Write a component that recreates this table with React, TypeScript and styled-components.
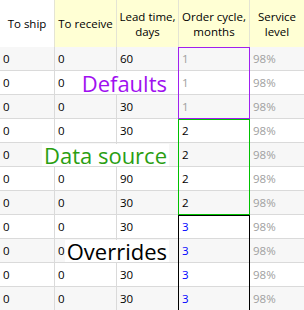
import styled, { createGlobalStyle } from "styled-components";

const GlobalStyle = createGlobalStyle`
  html, body {
    margin: 0;
    padding: 0;
    background: #ffffff;
  }
  body {
    font-family: "Open Sans", "Noto Sans", sans-serif;
  }
`

const grid = "#dadada";

const Table = styled.div`
  display: grid;
  grid-template-columns: 55px 62px 62px 71px 54px;
  grid-template-rows: 47px repeat(11, 24px);
  width: 304px;
  height: 310px;
  overflow: hidden;
  font-size: 11.5px;
  color: #000;
`

const HeadCell = styled.div<{ $plain?: boolean, $last?: boolean }>`
  grid-row: 1;
  box-sizing: border-box;
  display: flex;
  align-items: center;
  justify-content: center;
  text-align: center;
  line-height: 15px;
  padding: 0 2px;
  background: ${props => props.$plain ? "#ffffff" : "#ffffd4"};
  border-right: ${props => props.$last ? "none" : "1px solid #e4e4d4"};
`

const Cell = styled.div<{ $row: number, $col: number, $color?: string }>`
  grid-row: ${props => props.$row};
  grid-column: ${props => props.$col};
  box-sizing: border-box;
  display: flex;
  align-items: center;
  padding-left: 3px;
  background: ${props => props.$row % 2 === 0 ? "#f7f7f7" : "#ffffff"};
  color: ${props => props.$color || "#000"};
  border-bottom: 1px solid ${grid};
  border-right: ${props => props.$col === 5 ? "none" : `1px solid ${grid}`};
`

const Frame = styled.div<{ $color: string, $row: number, $span: number }>`
  grid-column: 4;
  grid-row: ${props => `${props.$row} / span ${props.$span}`};
  margin-left: -1px;
  border: 1px solid ${props => props.$color};
  pointer-events: none;
`

const Label = styled.div<{ $color: string, $row: number }>`
  grid-column: 1 / 4;
  grid-row: ${props => props.$row};
  justify-self: end;
  align-self: center;
  margin-right: 10px;
  padding: 0 2px;
  background: #ffffff;
  color: ${props => props.$color};
  font-size: 22px;
  line-height: 22px;
`

// a row: [to ship, to receive, lead time] — null where a label sits on top
type Row = [string, string | null, string | null]

type Group = {
  value: string
  color: string
  frame: string
  label: string
  labelColor: string
  rows: Row[]
}

const groups: Group[] = [
  {
    value: "1", color: "#a0a0a0", frame: "#a020f0", label: "Defaults", labelColor: "#a010f0",
    rows: [["0", "0", "60"], ["0", "0", null], ["0", "0", "30"]]
  },
  {
    value: "2", color: "#000000", frame: "#00c000", label: "Data source", labelColor: "#2a9e12",
    rows: [["0", "0", "30"], ["0", null, null], ["0", "0", "90"], ["0", "0", "30"]]
  },
  {
    value: "3", color: "#0000ff", frame: "#000000", label: "Overrides", labelColor: "#000000",
    rows: [["0", "0", "30"], ["0", "0", null], ["0", "0", "30"], ["0", "0", "30"]]
  },
]

const App = () => {
  let row = 2;
  const cells: JSX.Element[] = [];
  const overlays: JSX.Element[] = [];

  groups.forEach((g, gi) => {
    overlays.push(<Frame key={`f${gi}`} $color={g.frame} $row={row} $span={g.rows.length}/>);
    overlays.push(<Label key={`l${gi}`} $color={g.labelColor} $row={row + 1}>{g.label}</Label>);
    g.rows.forEach(([ship, receive, lead]) => {
      cells.push(
        <Cell key={`a${row}`} $row={row} $col={1}>{ship}</Cell>,
        <Cell key={`b${row}`} $row={row} $col={2}>{receive}</Cell>,
        <Cell key={`c${row}`} $row={row} $col={3}>{lead}</Cell>,
        <Cell key={`d${row}`} $row={row} $col={4} $color={g.color}>{g.value}</Cell>,
        <Cell key={`e${row}`} $row={row} $col={5} $color="#a0a0a0">98%</Cell>,
      );
      row++;
    });
  });

  return (
    <>
      <GlobalStyle/>
      <Table>
        <HeadCell $plain>To ship</HeadCell>
        <HeadCell>To receive</HeadCell>
        <HeadCell>Lead time,<br/>days</HeadCell>
        <HeadCell>Order cycle,<br/>months</HeadCell>
        <HeadCell $last>Service<br/>level</HeadCell>
        {cells}
        {overlays}
      </Table>
    </>
  );
};

export default App;
